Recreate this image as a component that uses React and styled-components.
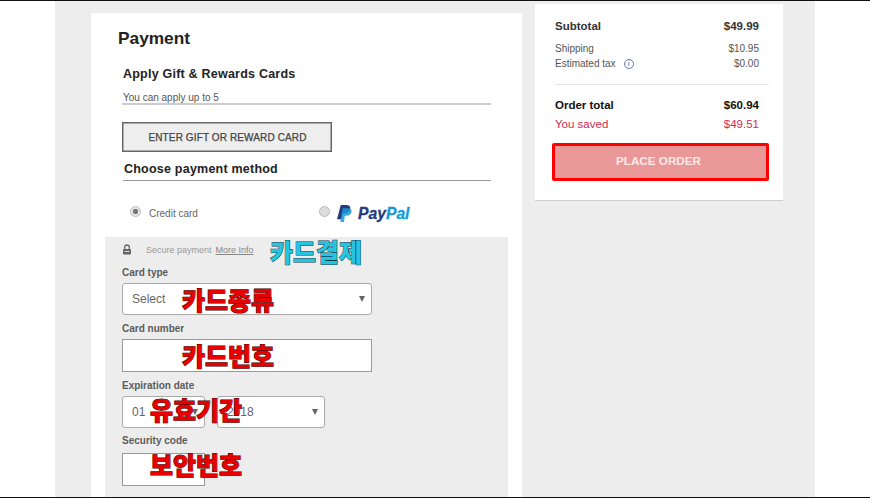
import React from 'react';
import styled, { createGlobalStyle } from 'styled-components';

const GlobalStyle = createGlobalStyle`
  html, body {
    margin: 0;
    padding: 0;
    background: #fff;
    overflow: hidden;
  }
  body {
    font-family: "Liberation Sans", Arial, sans-serif;
    color: #222;
  }
`;

const Frame = styled.div`
  width: 870px;
  height: 498px;
  box-sizing: border-box;
  border-top: 1px solid #111;
  border-bottom: 1px solid #111;
  padding: 0 55px;
  overflow: hidden;
`;

const Page = styled.div`
  height: 100%;
  background: #ededed;
  display: flex;
  align-items: flex-start;
  padding-left: 36px;
  gap: 13px;
`;

const PaymentPanel = styled.section`
  width: 431px;
  height: 484px;
  margin-top: 12px;
  background: #fff;
  padding-top: 15px;
  box-sizing: border-box;
`;

const Title = styled.h1`
  margin: 0 0 0 27px;
  font-size: 17.3px;
  line-height: 20px;
  font-weight: 700;
  color: #222;
`;

const GiftBlock = styled.div`
  margin: 18px 31px 0 31px;
`;

const SubHeading = styled.h2`
  margin: 0 0 0 1px;
  font-size: 12.5px;
  line-height: 16px;
  font-weight: 700;
  letter-spacing: 0.22px;
  color: #222;
`;

const ApplyNote = styled.div`
  margin-top: 10px;
  padding: 0 1px;
  font-size: 10px;
  line-height: 11px;
  color: #555;
  border-bottom: 2px solid #ccc;
`;

const GiftButton = styled.button`
  display: block;
  width: 210px;
  height: 30px;
  margin-top: 17px;
  padding: 0 0 0 1px;
  background: #eee;
  border: 1px solid #666;
  box-shadow: inset 0 0 0 0.5px #666;
  font-family: inherit;
  font-size: 10px;
  letter-spacing: 0.12px;
  font-weight: 400;
  color: #444;
  -webkit-text-stroke: 0.25px #444;
`;

const MethodHeading = styled.h2`
  margin: 9px 0 0 1px;
  padding: 0 0 3px 1px;
  font-size: 12.5px;
  line-height: 16px;
  font-weight: 700;
  letter-spacing: 0.22px;
  color: #222;
  border-bottom: 1px solid #999;
`;

const MethodRow = styled.div`
  display: flex;
  align-items: center;
  height: 56px;
  padding: 9px 0 0 39px;
  box-sizing: border-box;
`;

const Method = styled.label`
  display: flex;
  align-items: center;
  width: ${p => p.$width}px;
  flex: none;
`;

const Radio = styled.span`
  width: 11px;
  height: 11px;
  margin: ${p => p.$logo ? '-5px 7px 0 0' : '-4px 8px 0 0'};
  flex: none;
  box-sizing: border-box;
  border-radius: 50%;
  border: 1px solid #bbb;
  background: ${p => p.$checked
    ? 'radial-gradient(circle, #777 0 2.5px, #e6e6e6 3px)'
    : '#ddd'};
`;

const MethodLabel = styled.span`
  font-size: 10px;
  color: #666;
`;

const PayPalText = styled.span`
  font-size: 15.7px;
  line-height: 16px;
  font-style: italic;
  font-weight: 700;
  margin-left: 6px;
  color: #253b80;
  -webkit-text-stroke: 0.3px currentColor;
  em { color: #179bd7; font-style: italic; }
`;

const CardSection = styled.div`
  position: relative;
  margin: 0 14px;
  height: 260px;
  background: #ededed;
  padding: 6px 0 0 17px;
  box-sizing: border-box;
`;

const SecureRow = styled.div`
  display: flex;
  align-items: center;
  height: 14px;
  font-size: 9px;
  color: #999;
  svg { margin: -2px 14px 0 0; flex: none; }
  a { margin-left: 4px; color: #888; text-decoration: underline; }
`;

const FieldLabel = styled.div`
  margin-top: ${p => p.$top}px;
  height: 13px;
  font-size: 10px;
  line-height: 13px;
  font-weight: 700;
  color: #5c5c5c;
`;

const Field = styled.div`
  position: relative;
  margin-top: ${p => p.$top || 4}px;
  display: flex;
  gap: 12px;
`;

const SelectBox = styled.div`
  width: ${p => p.$width}px;
  height: 32px;
  box-sizing: border-box;
  background: #fff;
  border: 1px solid #aaa;
  border-radius: 3px;
  display: flex;
  align-items: center;
  justify-content: space-between;
  padding: 0 6px 0 9px;
  font-size: 12px;
  color: #666;
  &::after {
    content: '';
    border-left: 3.5px solid transparent;
    border-right: 3.5px solid transparent;
    border-top: 6px solid #666;
  }
`;

const InputBox = styled.div`
  width: ${p => p.$width}px;
  height: 33px;
  box-sizing: border-box;
  background: #fff;
  border: 1px solid #999;
`;

const Annotation = styled.span`
  position: absolute;
  left: ${p => p.$left}px;
  top: ${p => p.$top}px;
  font-family: "Noto Sans CJK KR", sans-serif;
  font-size: 25px;
  line-height: 28px;
  font-weight: 900;
  white-space: nowrap;
  color: ${p => p.$cyan ? '#27c4e0' : '#e60000'};
  -webkit-text-stroke: 1px ${p => p.$cyan ? '#0a3a4a' : '#3a0000'};
  paint-order: stroke fill;
`;

const SummaryPanel = styled.aside`
  width: 248px;
  height: 197px;
  margin-top: 3px;
  background: #fff;
  border-bottom: 1px solid #ccc;
  box-sizing: border-box;
  padding: 14px 14px 0 17px;
`;

const Row = styled.div`
  display: flex;
  justify-content: space-between;
  align-items: center;
  padding: 0 10px 0 3px;
  height: 15px;
  margin-top: ${p => p.$gap || 0}px;
  font-size: ${p => p.$size || 10}px;
  font-weight: ${p => p.$bold ? 700 : 400};
  color: ${p => p.$color || '#555'};
`;

const InfoIcon = styled.span`
  display: inline-flex;
  align-items: center;
  justify-content: center;
  width: 10px;
  height: 10px;
  margin-left: 8px;
  box-sizing: border-box;
  border: 1px solid #5a7ab8;
  border-radius: 50%;
  font-family: "Liberation Serif", serif;
  font-style: italic;
  font-size: 8px;
  color: #4a6cb0;
`;

const RowLabel = styled.span`
  display: flex;
  align-items: center;
`;

const Divider = styled.hr`
  margin: 13px 0 0 3px;
  border: none;
  border-top: 1px solid #e6e6e6;
`;

const PlaceOrder = styled.button`
  display: block;
  width: 217px;
  height: 38px;
  margin-top: 12px;
  padding: 0 4px 3px 0;
  box-sizing: border-box;
  background: #e99797;
  border: 3px solid #f00;
  border-radius: 2px;
  font-family: inherit;
  font-size: 11.7px;
  font-weight: 700;
  color: #fdeaea;
`;

const LockIcon = () => (
  <svg width="10" height="11" viewBox="0 0 10 11">
    <path d="M2.7 5V3.3a2.3 2.3 0 0 1 4.6 0V5" fill="none" stroke="#666" strokeWidth="1.3" />
    <rect x="1" y="5" width="8" height="5.500" rx="1" fill="#666" />
    <rect x="2.500" y="7" width="5" height="1" fill="#ddd" />
  </svg>
);

const PayPalMark = () => (
  <svg width="15" height="17" viewBox="0 0 16 18">
    <path d="M4 0h6c3 0 4.600 1.600 4.100 4.300C13.500 7.500 11.300 9 8 9H6l-1 6H0z" fill="#253b80" />
    <path d="M6.200 3.500h5.500c2.800 0 4.200 1.300 3.800 3.700-.5 3-2.600 4.300-5.600 4.300H8.300L7.500 18H3.500z" fill="#179bd7" opacity=".85" />
  </svg>
);

const App = () => {
  return (
    <Frame>
      <GlobalStyle />
      <Page>
        <PaymentPanel>
          <Title>Payment</Title>
          <GiftBlock>
            <SubHeading>Apply Gift &amp; Rewards Cards</SubHeading>
            <ApplyNote>You can apply up to 5</ApplyNote>
            <GiftButton>ENTER GIFT OR REWARD CARD</GiftButton>
            <MethodHeading>Choose payment method</MethodHeading>
          </GiftBlock>
          <MethodRow>
            <Method $width={189}>
              <Radio $checked />
              <MethodLabel>Credit card</MethodLabel>
            </Method>
            <Method $width={100}>
              <Radio $logo />
              <PayPalMark />
              <PayPalText>Pay<em>Pal</em></PayPalText>
            </Method>
          </MethodRow>
          <CardSection>
            <SecureRow>
              <LockIcon />
              <span>Secure payment</span>
              <a>More Info</a>
            </SecureRow>
            <Annotation $cyan $left={165} $top={0}>카드결제</Annotation>
            <FieldLabel $top={9}>Card type</FieldLabel>
            <Field>
              <SelectBox $width={250}>Select</SelectBox>
              <Annotation $left={60} $top={2}>카드종류</Annotation>
            </Field>
            <FieldLabel $top={7}>Card number</FieldLabel>
            <Field>
              <InputBox $width={250} />
              <Annotation $left={60} $top={2}>카드번호</Annotation>
            </Field>
            <FieldLabel $top={7}>Expiration date</FieldLabel>
            <Field>
              <SelectBox $width={83}>01</SelectBox>
              <SelectBox $width={108}>2018</SelectBox>
              <Annotation $left={28} $top={-1}>유효기간</Annotation>
            </Field>
            <FieldLabel $top={6}>Security code</FieldLabel>
            <Field $top={6}>
              <InputBox $width={83} />
              <Annotation $left={28} $top={-3}>보안번호</Annotation>
            </Field>
          </CardSection>
        </PaymentPanel>
        <SummaryPanel>
          <Row $size={11.5} $bold $color="#333">
            <span>Subtotal</span>
            <span>$49.99</span>
          </Row>
          <Row $gap={8}>
            <span>Shipping</span>
            <span>$10.95</span>
          </Row>
          <Row>
            <RowLabel>Estimated tax<InfoIcon>i</InfoIcon></RowLabel>
            <span>$0.00</span>
          </Row>
          <Divider />
          <Row $size={11.5} $bold $color="#111" $gap={12}>
            <span>Order total</span>
            <span>$60.94</span>
          </Row>
          <Row $size={11.5} $color="#d9264f" $gap={4}>
            <span>You saved</span>
            <span>$49.51</span>
          </Row>
          <PlaceOrder>PLACE ORDER</PlaceOrder>
        </SummaryPanel>
      </Page>
    </Frame>
  );
};

export default App;
